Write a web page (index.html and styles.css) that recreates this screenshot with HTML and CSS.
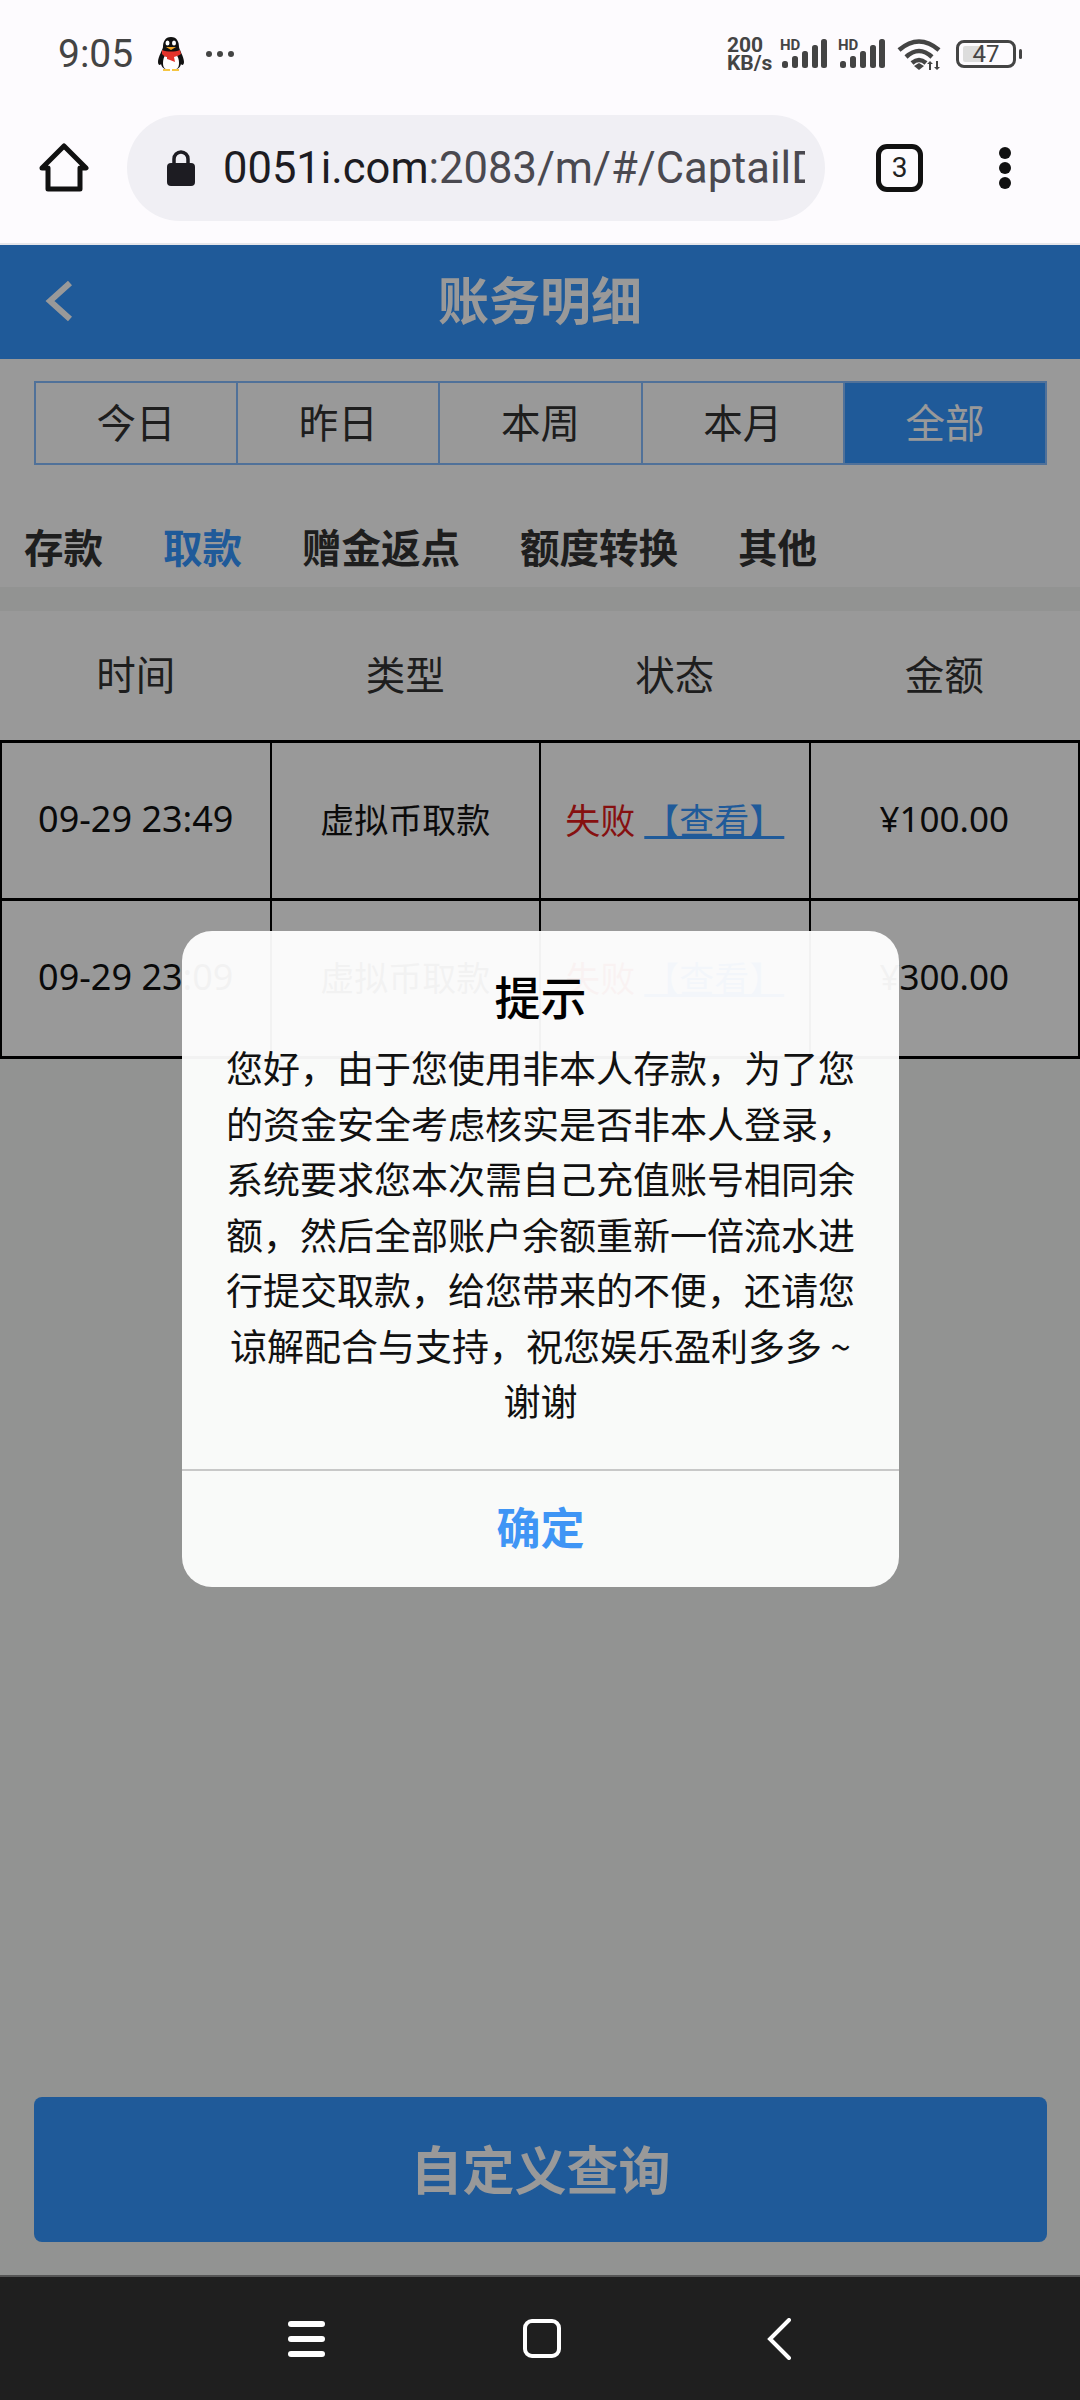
FILE: index.html
```html
<!DOCTYPE html>
<html lang="zh-CN">
<head>
    <meta charset="UTF-8">
    <meta name="viewport" content="width=device-width, initial-scale=1.0">
    <title>账务明细</title>
    <link rel="stylesheet" href="styles.css">
</head>
<body>
<div class="phone">

    <div class="status-bar">
        <span class="clock">9:05</span>
        <svg class="penguin" width="34" height="36" viewBox="0 0 34 36">
            <path d="M17 1c-6 0-8 5-8 10 0 2-5 10-5 15 0 3 2 4 3 2 1 4 4 6 10 6s9-2 10-6c1 2 3 1 3-2 0-5-5-13-5-15 0-5-2-10-8-10z" fill="#111"/>
            <path d="M9 27c0-6 3-11 8-11s8 5 8 11-3 7-8 7-8-1-8-7z" fill="#fff"/>
            <path d="M8 14c5 2 13 2 18 0l1 4c-3 2-5 2-7 3l1 5-5-2-3-1v-2c-2 0-3-1-5-3z" fill="#e4332b"/>
            <ellipse cx="13.5" cy="7" rx="2" ry="2.6" fill="#fff"/>
            <ellipse cx="20" cy="7" rx="2" ry="2.6" fill="#fff"/>
            <path d="M12 11h10l-5 3z" fill="#f5a623"/>
            <path d="M9 33h7v2H9zM18 33h7v2h-7z" fill="#f5c542"/>
        </svg>
        <span class="more-dots">
            <i></i><i></i><i></i>
        </span>
        <div class="status-right">
            <span class="speed">200<br>KB/s</span>
            <span class="signal">
                <b>HD</b>
                <svg width="48" height="30" viewBox="0 0 48 30" fill="#444">
                    <rect x="2" y="22" width="6" height="7" rx="2.5"/>
                    <rect x="12" y="17" width="6" height="12" rx="2.5"/>
                    <rect x="22" y="12" width="6" height="17" rx="2.5"/>
                    <rect x="32" y="6" width="6" height="23" rx="2.5"/>
                    <rect x="41" y="0" width="6" height="29" rx="2.5"/>
                </svg>
            </span>
            <span class="signal">
                <b>HD</b>
                <svg width="48" height="30" viewBox="0 0 48 30" fill="#444">
                    <rect x="2" y="22" width="6" height="7" rx="2.5"/>
                    <rect x="12" y="17" width="6" height="12" rx="2.5"/>
                    <rect x="22" y="12" width="6" height="17" rx="2.5"/>
                    <rect x="32" y="6" width="6" height="23" rx="2.5"/>
                    <rect x="41" y="0" width="6" height="29" rx="2.5"/>
                </svg>
            </span>
            <svg class="wifi" width="46" height="34" viewBox="0 0 46 34">
                <path d="M2 13Q22-4 42 13M9 20Q22 8 35 20M15 26Q22 20 29 26" fill="none" stroke="#444" stroke-width="4.5"/>
                <path d="M17 29l5-3 5 3-5 4z" fill="#444"/>
                <path d="M32 27v6h2v-6h2l-3-3-3 3zM39 24v6h-2l3 3 3-3h-2v-6z" fill="#444"/>
            </svg>
            <span class="battery"><span class="battery-fill"></span><span class="battery-num">47</span></span>
            <span class="battery-tip"></span>
        </div>
    </div>

    <div class="url-bar">
        <svg class="home" width="50" height="50" viewBox="0 0 50 50">
            <path d="M3 25L25 3l22 22h-6v21H9V25z" fill="none" stroke="#111" stroke-width="5" stroke-linejoin="round"/>
        </svg>
        <div class="url-pill">
            <svg class="lock" width="30" height="38" viewBox="0 0 30 38">
                <path d="M8 15V10a7 7 0 0 1 14 0v5" fill="none" stroke="#1d1c22" stroke-width="3.5"/>
                <rect x="1" y="14" width="28" height="23" rx="4" fill="#1d1c22"/>
            </svg>
            <span class="url-text"><span class="url-host">0051i.com</span>:2083/m/#/CaptailD</span>
        </div>
        <span class="tab-count">3</span>
        <span class="menu-dots"><i></i><i></i><i></i></span>
    </div>

    <div class="content">
        <div class="top-section">
            <div class="header">
                <svg class="back" width="30" height="42" viewBox="0 0 30 42">
                    <path d="M25 3L5 21l20 18" fill="none" stroke="#fff" stroke-width="6"/>
                </svg>
                <span class="header-title">账务明细</span>
            </div>
            <div class="range-tabs">
                <span class="range-tab">今日</span>
                <span class="range-tab">昨日</span>
                <span class="range-tab">本周</span>
                <span class="range-tab">本月</span>
                <span class="range-tab active">全部</span>
            </div>
            <div class="type-tabs">
                <span class="type-tab">存款</span>
                <span class="type-tab active">取款</span>
                <span class="type-tab">赠金返点</span>
                <span class="type-tab">额度转换</span>
                <span class="type-tab">其他</span>
            </div>
        </div>

        <table class="records">
            <thead>
                <tr><th>时间</th><th>类型</th><th>状态</th><th>金额</th></tr>
            </thead>
            <tbody>
                <tr>
                    <td class="time">09-29 23:49</td>
                    <td>虚拟币取款</td>
                    <td><span class="fail">失败</span> <a class="view">【查看】</a></td>
                    <td>¥100.00</td>
                </tr>
                <tr>
                    <td class="time">09-29 23:09</td>
                    <td>虚拟币取款</td>
                    <td><span class="fail">失败</span> <a class="view">【查看】</a></td>
                    <td>¥300.00</td>
                </tr>
            </tbody>
        </table>

        <div class="query-wrap">
            <button class="query-btn">自定义查询</button>
        </div>

        <div class="mask"></div>

        <div class="dialog">
            <div class="dialog-title">提示</div>
            <div class="dialog-body">您好&#65292;由于您使用非本人存款&#65292;为了您的资金安全考虑核实是否非本人登录&#65292;系统要求您本次需自己充值账号相同余额&#65292;然后全部账户余额重新一倍流水进行提交取款&#65292;给您带来的不便&#65292;还请您谅解配合与支持&#65292;祝您娱乐盈利多多 ~ 谢谢</div>
            <div class="dialog-btn">确定</div>
        </div>
    </div>

    <div class="nav-bar">
        <span class="nav-menu"><i></i><i></i><i></i></span>
        <span class="nav-home"></span>
        <svg class="nav-back" width="28" height="42" viewBox="0 0 28 42">
            <path d="M24 2L5 21l19 19" fill="none" stroke="#fff" stroke-width="4" stroke-linecap="round"/>
        </svg>
    </div>

</div>
</body>
</html>
```

FILE: styles.css
```css
* {
    box-sizing: border-box;
}

body {
    margin: 0;
    font-family: "Noto Sans CJK SC", "Noto Sans", sans-serif;
    background: #fff;
}

.phone {
    width: 1080px;
    height: 2400px;
    display: flex;
    flex-direction: column;
    overflow: hidden;
}

/* status bar */
.status-bar {
    height: 108px;
    flex: none;
    padding: 0 58px 0 58px;
    display: flex;
    align-items: center;
    background: #fdfbfe;
    color: #444;
}

.clock {
    font-family: Roboto, sans-serif;
    font-size: 39px;
    width: 96px;
}

.penguin {
    margin-right: 18px;
}

.more-dots {
    display: flex;
    gap: 5px;
}

.more-dots i {
    width: 6px;
    height: 6px;
    border-radius: 50%;
    background: #444;
}

.status-right {
    margin-left: auto;
    display: flex;
    align-items: center;
}

.speed {
    font-family: Roboto, sans-serif;
    font-weight: 700;
    font-size: 21px;
    line-height: 18px;
    width: 53px;
}

.signal {
    display: block;
    position: relative;
    width: 58px;
    height: 30px;
}

.signal b {
    position: absolute;
    left: 0;
    top: 0;
    font-family: Roboto, sans-serif;
    font-size: 15px;
    line-height: 12px;
}

.signal svg {
    position: absolute;
    left: 0;
    top: 0;
}

.wifi {
    margin: 0 13px 0 1px;
}

.battery {
    width: 60px;
    height: 28px;
    border: 3px solid #444;
    border-radius: 8px;
    position: relative;
    display: block;
}

.battery-fill {
    position: absolute;
    left: 4px;
    top: 3px;
    bottom: 3px;
    width: 21px;
    background: #ddd;
    border-radius: 2px;
}

.battery-num {
    position: absolute;
    left: 0;
    right: 0;
    top: -1px;
    text-align: center;
    font-family: Roboto, sans-serif;
    font-size: 24px;
    line-height: 24px;
}

.battery-tip {
    width: 3px;
    height: 10px;
    margin-left: 3px;
    background: #444;
    border-radius: 2px;
}

/* browser bar */
.url-bar {
    height: 137px;
    flex: none;
    display: flex;
    align-items: flex-start;
    background: #fdfbfe;
    border-bottom: 2px solid #e6e6ea;
    padding-top: 7px;
}

.home {
    margin: 28px 0 0 39px;
}

.url-pill {
    width: 698px;
    height: 106px;
    margin-left: 38px;
    padding: 0 20px 0 39px;
    display: flex;
    align-items: center;
    border-radius: 53px;
    background: #f0eff4;
}

.lock {
    flex: none;
    margin-right: 27px;
}

.url-text {
    font-family: Roboto, sans-serif;
    font-size: 43.5px;
    color: #4a4950;
    white-space: nowrap;
    overflow: hidden;
}

.url-host {
    color: #1d1c22;
}

.tab-count {
    width: 47px;
    height: 48px;
    margin: 29px 0 0 51px;
    border: 5px solid #111;
    border-radius: 11px;
    font-family: Roboto, sans-serif;
    font-size: 28px;
    line-height: 38px;
    text-align: center;
    color: #222;
}

.menu-dots {
    display: flex;
    flex-direction: column;
    gap: 3px;
    margin: 32px 0 0 76px;
}

.menu-dots i {
    width: 12px;
    height: 12px;
    border-radius: 50%;
    background: #111;
}

/* page content */
.content {
    flex: 1;
    position: relative;
    display: flex;
    flex-direction: column;
    background: #f3f5f4;
}

.top-section {
    height: 342px;
    background: #fff;
}

.header {
    height: 114px;
    background: #3496ff;
    display: flex;
    align-items: center;
    justify-content: center;
    position: relative;
}

.back {
    position: absolute;
    left: 45px;
    top: 35px;
}

.header-title {
    font-size: 51px;
    font-weight: 700;
    color: #fff;
    position: relative;
    top: -4px;
}

.range-tabs {
    display: flex;
    margin: 22px 33px 0 34px;
    height: 84px;
    border: 2px solid #86bdff;
}

.range-tab {
    flex: 1;
    border-right: 2px solid #86bdff;
    padding-bottom: 5px;
    font-size: 39.5px;
    color: #333;
    display: flex;
    align-items: center;
    justify-content: center;
}

.range-tab:last-child {
    border-right: none;
}

.range-tab.active {
    background: #3496ff;
    color: #fff;
}

.type-tabs {
    display: flex;
    gap: 60px;
    padding: 53px 0 0 24px;
}

.type-tab {
    font-size: 39.5px;
    font-weight: 700;
    line-height: 56px;
    color: #333;
}

.type-tab.active {
    color: #3496ff;
}

.records {
    width: 100%;
    margin-top: 24px;
    border-collapse: collapse;
    table-layout: fixed;
    background: #fff;
}

.records th {
    height: 130px;
    font-size: 39.5px;
    font-weight: 400;
    color: #333;
    padding: 0 0 6px;
}

.records td {
    height: 158px;
    border: 3px solid #000;
    border-left-width: 2px;
    border-right-width: 2px;
    font-family: "Noto Sans", "Noto Sans CJK SC", sans-serif;
    font-size: 35px;
    text-align: center;
    color: #111;
    padding: 0 0 4px;
}

.records td.time {
    font-size: 36px;
}

.records td:nth-child(2) {
    font-size: 34px;
}

.fail {
    color: #e01c1c;
}

.view {
    color: #3496ff;
    text-decoration: underline;
}

.query-wrap {
    margin-top: auto;
    padding: 0 33px 33px 34px;
}

.query-btn {
    display: block;
    width: 100%;
    height: 145px;
    padding: 0 0 5px;
    border: none;
    border-radius: 8px;
    background: #3496ff;
    color: #fff;
    font-family: inherit;
    font-size: 52px;
    font-weight: 700;
}

/* dialog over the page */
.mask {
    position: absolute;
    inset: 0;
    background: rgba(0, 0, 0, 0.4);
}

.dialog {
    position: absolute;
    left: 182px;
    top: 686px;
    width: 717px;
    height: 656px;
    border-radius: 30px;
    background: rgba(255, 255, 255, 0.95);
    display: flex;
    flex-direction: column;
    text-align: center;
    overflow: hidden;
}

.dialog-title {
    margin-top: 31px;
    font-size: 46px;
    line-height: 66px;
    font-weight: 500;
    color: #000;
}

.dialog-body {
    margin-top: 12px;
    padding: 0 41px;
    flex: 1;
    font-size: 37px;
    line-height: 55.5px;
    color: #111;
}

.dialog-btn {
    height: 118px;
    border-top: 2px solid #c8c8c8;
    font-size: 44px;
    font-weight: 700;
    line-height: 110px;
    color: #3f95f5;
}

/* android nav */
.nav-bar {
    height: 125px;
    flex: none;
    background: #1f1f1f;
    border-top: 2px solid #555;
    display: flex;
    align-items: center;
    justify-content: center;
    gap: 198px;
}

.nav-menu {
    display: flex;
    flex-direction: column;
    gap: 9px;
}

.nav-menu i {
    width: 37px;
    height: 6px;
    border-radius: 3px;
    background: #fff;
}

.nav-home {
    width: 38px;
    height: 39px;
    border: 4px solid #fff;
    border-radius: 9px;
}

.nav-back {
    margin-left: 6px;
}
```
